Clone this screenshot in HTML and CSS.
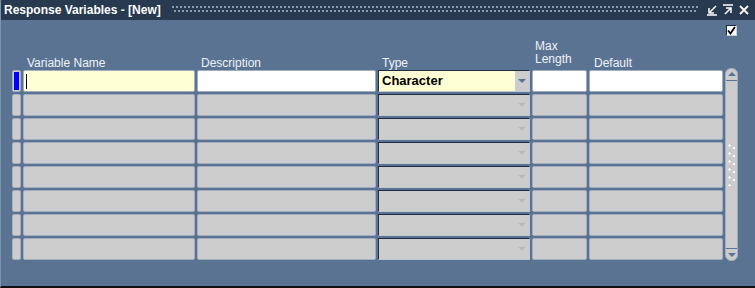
FILE: index.html
```html
<!DOCTYPE html>
<html lang="en">
<head>
  <meta charset="UTF-8">
  <title>Response Variables - [New]</title>
  <link rel="stylesheet" href="styles.css">
</head>
<body>
  <div class="window">
    <div class="titlebar">
      <span class="title">Response Variables - [New]</span>
      <span class="dots"></span>
      <span class="tb-icons">
        <svg width="12" height="12" viewBox="0 0 12 12"><path d="M10 2 L3 9 M3 4 V9 H8 M1 11 H11" stroke="#fff" stroke-width="1.5" fill="none"/></svg>
        <svg width="12" height="12" viewBox="0 0 12 12"><path d="M1 1 H11 M3 10 L9 4 M4 4 H9 V9" stroke="#fff" stroke-width="1.5" fill="none"/></svg>
        <svg width="12" height="12" viewBox="0 0 12 12"><path d="M2 2 L10 10 M10 2 L2 10" stroke="#fff" stroke-width="1.8" fill="none"/></svg>
      </span>
    </div>

    <div class="content">
      <div class="toprow">
        <span class="check">
          <svg width="9" height="9" viewBox="0 0 9 9"><path d="M1 4.5 L3.5 7.5 L8 1" stroke="#000" stroke-width="1.8" fill="none"/></svg>
        </span>
      </div>

      <div class="grid heads">
        <span></span>
        <label>Variable Name</label>
        <label>Description</label>
        <label>Type</label>
        <label class="two">Max<br>Length</label>
        <label class="def">Default</label>
      </div>

      <div class="body">
        <div class="grid rows" id="rows"></div>
        <div class="scroll">
          <span class="sb-up"></span>
          <span class="sb-grip"></span>
          <span class="sb-down"></span>
        </div>
      </div>
    </div>
  </div>

  <script>
    const rows = document.getElementById("rows");
    for (let i = 0; i < 8; i++) {
      const cur = i === 0;
      rows.insertAdjacentHTML("beforeend",
        '<span class="ind' + (cur ? ' on' : '') + '"><i></i></span>' +
        '<span class="cell' + (cur ? ' req' : '') + '">' + (cur ? '<b class="caret"></b>' : '') + '</span>' +
        '<span class="cell' + (cur ? ' open' : '') + '"></span>' +
        '<span class="cell combo' + (cur ? ' req' : '') + '"><em>' + (cur ? 'Character' : '') + '</em><span class="btn"></span></span>' +
        '<span class="cell' + (cur ? ' open' : '') + '"></span>' +
        '<span class="cell' + (cur ? ' open' : '') + '"></span>');
    }
  </script>
</body>
</html>
```

FILE: styles.css
```css
html, body {
  margin: 0;
  padding: 0;
}
body {
  font-family: 'Liberation Sans', Arial, sans-serif;
  background: #5b7392;
}
.window {
  width: 755px;
  height: 288px;
  box-sizing: border-box;
  background: #5b7392;
  border-left: 1px solid #7f93ad;
  border-bottom: 2px solid #111;
  display: flex;
  flex-direction: column;
}
.titlebar {
  height: 20px;
  background: #283a4f;
  display: flex;
  align-items: center;
  padding-left: 3px;
}
.title {
  color: #fff;
  font-weight: bold;
  font-size: 12px;
  white-space: nowrap;
}
.dots {
  flex: 1;
  height: 8px;
  margin: 0 8px 0 11px;
  background-image:
    radial-gradient(circle at 1px 1px, #8a9bb0 0.9px, transparent 1.1px),
    radial-gradient(circle at 3px 5px, #8a9bb0 0.9px, transparent 1.1px);
  background-size: 4px 8px;
}
.tb-icons {
  display: flex;
  gap: 4px;
  padding-right: 5px;
}
.content {
  flex: 1;
  padding: 5px 0 0 11px;
}
.toprow {
  display: flex;
  justify-content: flex-end;
  padding-right: 18px;
  height: 15px;
}
.check {
  width: 9px;
  height: 9px;
  background: #fff;
  border: 1px solid #1c2838;
  border-right-color: #c8d0da;
  border-bottom-color: #c8d0da;
  display: flex;
}
.grid {
  display: grid;
  grid-template-columns: 9px 172px 179px 152px 55px 134px;
  column-gap: 2px;
}
.heads {
  height: 30px;
  align-items: end;
  padding-bottom: 2px;
  box-sizing: border-box;
}
.heads label {
  color: #eef2f7;
  font-size: 12px;
  line-height: 12px;
  padding-left: 4px;
}
.heads label.two {
  line-height: 13px;
  padding-left: 3px;
  padding-bottom: 3px;
}
.heads label.def {
  padding-left: 5px;
}
.body {
  display: flex;
  gap: 2px;
}
.rows {
  grid-auto-rows: 22px;
  row-gap: 2px;
}
.ind, .cell {
  box-sizing: border-box;
  background: #cccccc;
  border: 1px solid #a2aebd;
  border-radius: 2px;
  position: relative;
}
.ind i {
  display: block;
  margin: 1px;
  height: 18px;
}
.ind.on i {
  background: #0000ff;
}
.cell.req {
  background: #ffffd6;
}
.cell.open {
  background: #fff;
}
.caret {
  position: absolute;
  left: 2px;
  top: 3px;
  width: 1px;
  height: 15px;
  background: #000;
}
.combo {
  border-color: #1f2d40 #c0c8d2 #c0c8d2 #1f2d40;
  border-radius: 1px;
  display: flex;
}
.combo em {
  flex: 1;
  font-style: normal;
  font-weight: bold;
  font-size: 13px;
  line-height: 20px;
  padding-left: 3px;
}
.combo .btn {
  width: 14px;
  position: relative;
}
.combo.req .btn {
  background: #cdcdcd;
}
.combo .btn::after {
  content: "";
  position: absolute;
  left: 3px;
  top: 8px;
  border-left: 4px solid transparent;
  border-right: 4px solid transparent;
  border-top: 4px solid #b9b9b9;
}
.combo.req .btn::after {
  border-top-color: #5b7392;
}
.scroll {
  width: 13px;
  height: 193px;
  margin-top: -2px;
  box-sizing: border-box;
  background: #cccccc;
  border: 1px solid #a2aebd;
  border-radius: 6px;
  display: flex;
  flex-direction: column;
  justify-content: space-between;
  align-items: center;
}
.sb-up, .sb-down {
  width: 100%;
  height: 11px;
  position: relative;
}
.sb-up {
  border-bottom: 1px solid #5b7392;
}
.sb-down {
  border-top: 1px solid #5b7392;
}
.sb-up::after, .sb-down::after {
  content: "";
  position: absolute;
  left: 2px;
  border-left: 4px solid transparent;
  border-right: 4px solid transparent;
}
.sb-up::after {
  top: 3px;
  border-bottom: 4px solid #5b7392;
}
.sb-down::after {
  top: 4px;
  border-top: 4px solid #5b7392;
}
.sb-grip {
  width: 8px;
  height: 42px;
  background-image:
    radial-gradient(circle at 1.5px 1.5px, #fff 1px, transparent 1.2px),
    radial-gradient(circle at 6px 4px, #fff 1px, transparent 1.2px);
  background-size: 8px 8px;
}
```
